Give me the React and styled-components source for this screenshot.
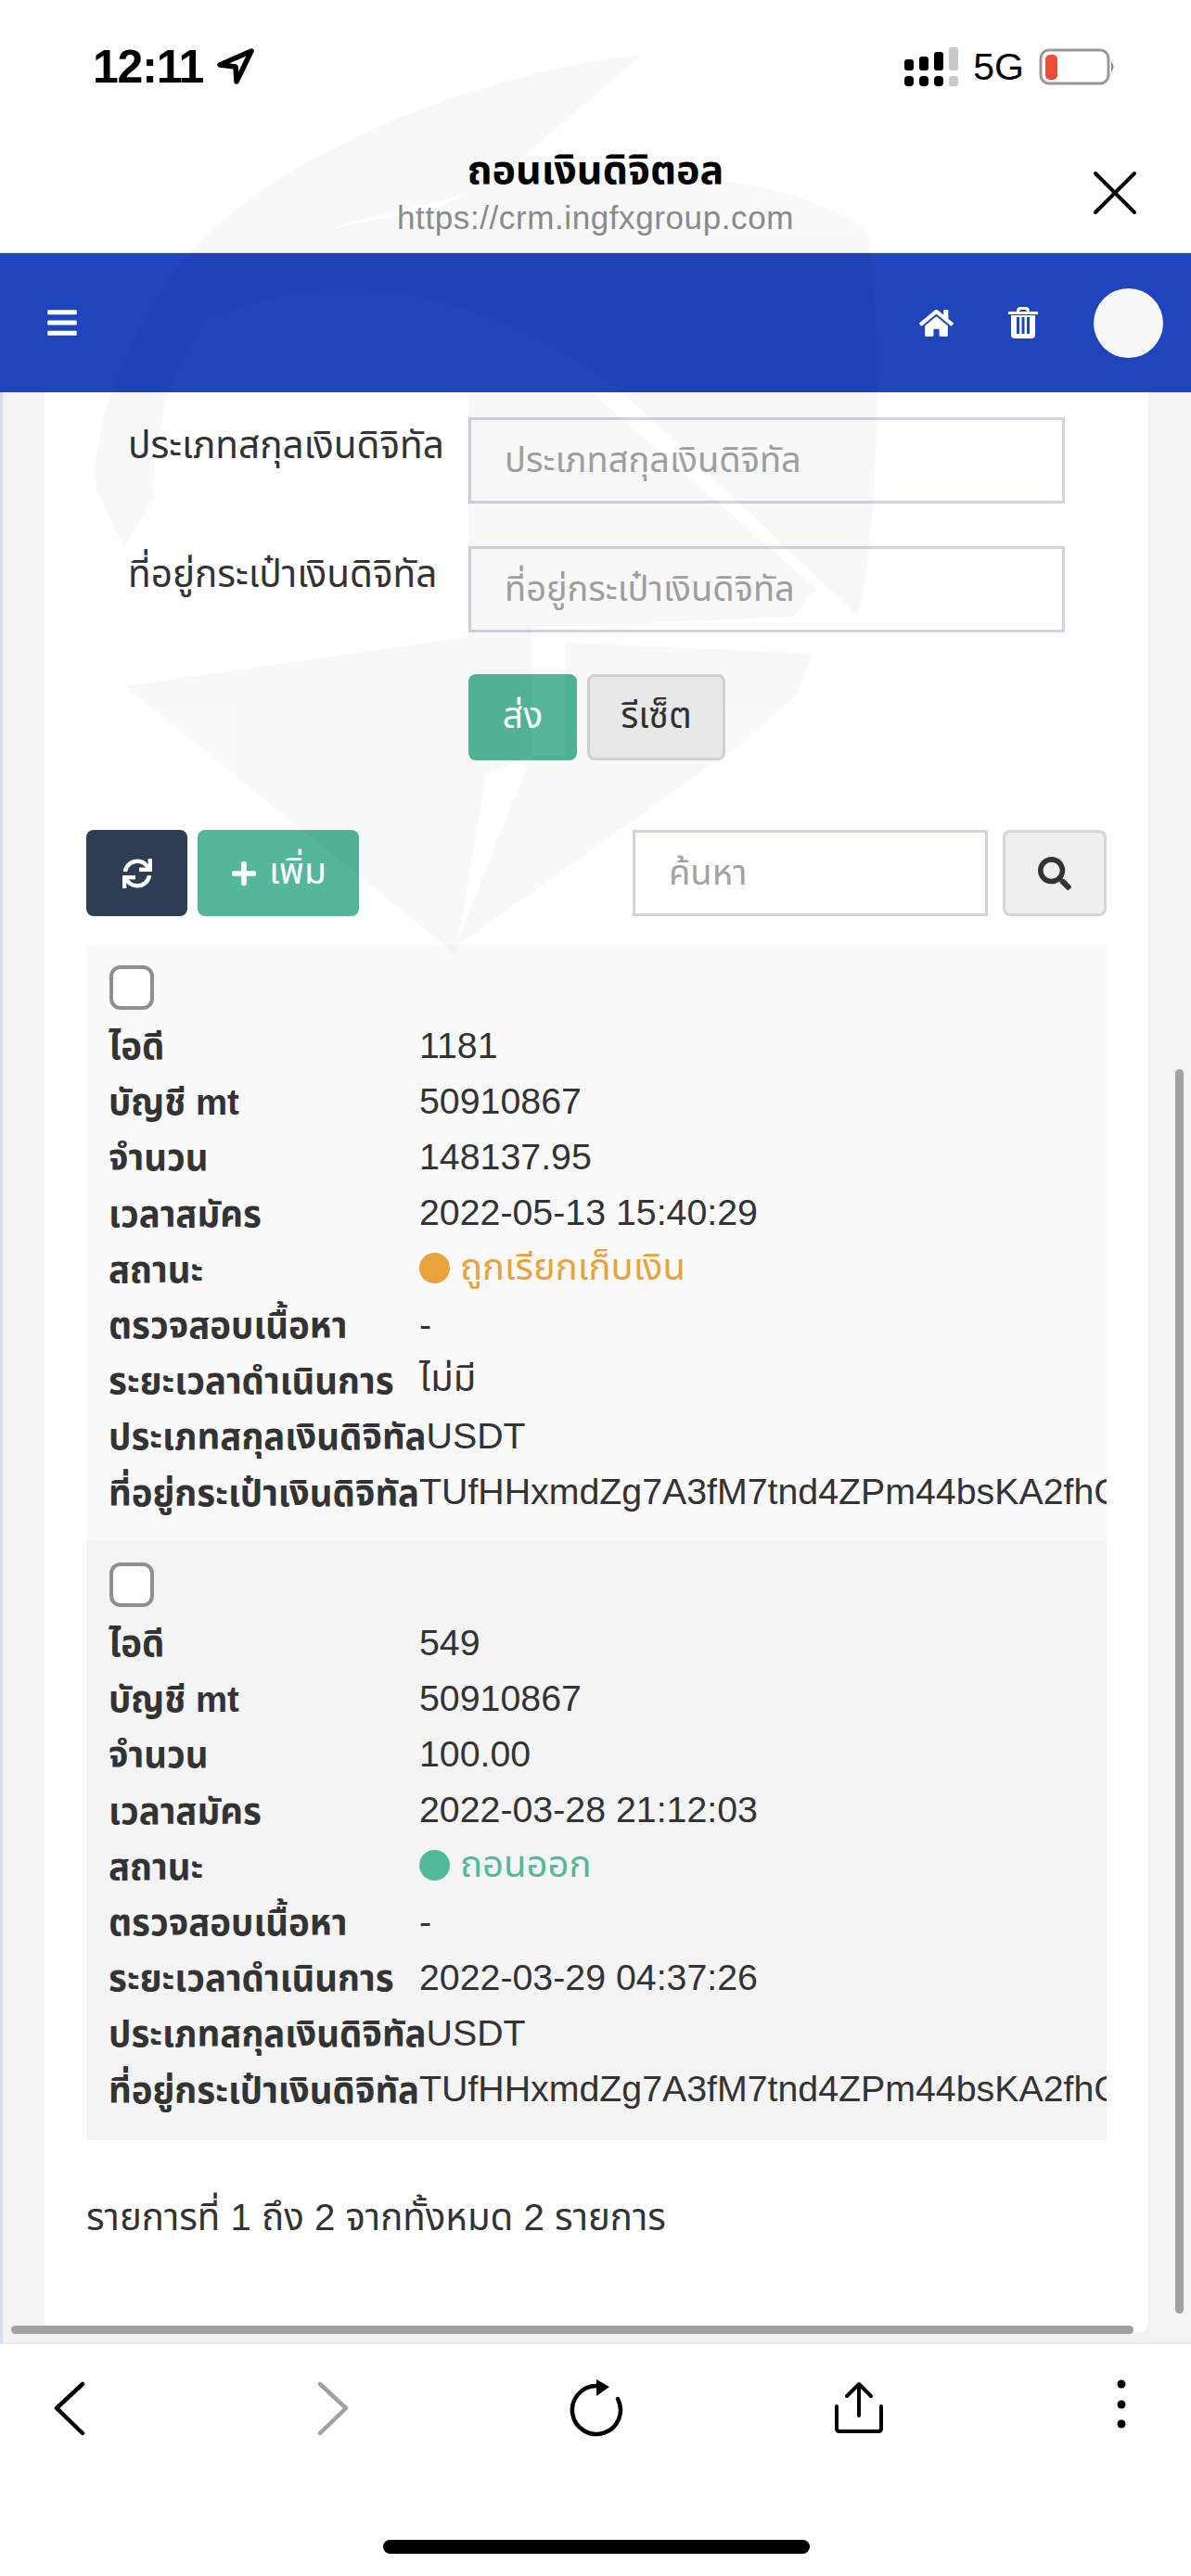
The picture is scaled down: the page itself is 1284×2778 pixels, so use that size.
import React from "react";
import styled, { createGlobalStyle } from "styled-components";
import { FaBars, FaHome, FaPlus, FaSearch, FaSync } from "react-icons/fa";

const Global = createGlobalStyle`
  html, body { margin: 0; padding: 0; background: #fff; }
  * { box-sizing: border-box; }
`;

const Phone = styled.div`
  position: relative;
  width: 1284px;
  height: 2778px;
  overflow: hidden;
  display: flex;
  flex-direction: column;
  background: #fff;
  font-family: "Liberation Sans", "Noto Sans", "Noto Sans Thai", sans-serif;
  color: #333;
`;

const Watermark = styled.svg`
  position: absolute;
  left: 0;
  top: 0;
  width: 1284px;
  height: 1100px;
  pointer-events: none;
  z-index: 5;
`;

const StatusBar = styled.div`
  height: 140px;
  flex: none;
  display: flex;
  justify-content: space-between;
  align-items: center;
  padding: 4px 80px 0 100px;
`;

const Clock = styled.div`
  display: flex;
  align-items: center;
  gap: 15px;
  font-size: 50px;
  font-weight: 700;
  letter-spacing: -1.2px;
  color: #000;
`;

const StatusRight = styled.div`
  display: flex;
  align-items: center;
  gap: 16px;
`;

const NetLabel = styled.span`
  font-size: 41px;
  color: #000;
`;

const TitleBar = styled.div`
  position: relative;
  height: 133px;
  flex: none;
  display: flex;
  flex-direction: column;
  align-items: center;
  padding-top: 13px;
  border-bottom: 1px solid #e4e4e4;
`;

const Title = styled.div`
  font-size: 43px;
  font-weight: 700;
  line-height: 60px;
  color: #000;
`;

const Url = styled.div`
  font-size: 35px;
  line-height: 44px;
  color: #8e8e8e;
  letter-spacing: 0.6px;
`;

const CloseButton = styled.svg`
  position: absolute;
  right: 58px;
  top: 44px;
  width: 48px;
  height: 48px;
`;

const NavBar = styled.div`
  height: 150px;
  flex: none;
  display: flex;
  align-items: center;
  background: #1f45bd;
  color: #fff;
  padding: 0 30px 0 50px;
`;

const NavSpacer = styled.div`
  flex: 1;
`;

const NavIcon = styled.span`
  display: flex;
  justify-content: center;
  width: ${(p) => p.$w}px;
  font-size: ${(p) => p.$size}px;
`;

const TrashIcon = styled.svg`
  width: 32px;
  height: 34px;
  margin-left: 58px;
`;

const Avatar = styled.div`
  width: 75px;
  height: 75px;
  border-radius: 50%;
  background: #f8f8f8;
  margin-left: 60px;
`;

const Viewport = styled.div`
  position: relative;
  height: 2105px;
  flex: none;
  background: #f3f3f4;
  border-left: 3px solid #d9deea;
  border-bottom: 2px solid #e9e9e9;
  padding: 0 46px 0 45px;
  overflow: hidden;
`;

const Card = styled.div`
  height: 2092px;
  background: #fff;
  border-radius: 0 0 10px 10px;
  padding: 27px 45px 0;
  overflow: hidden;
`;

const FormRow = styled.div`
  display: flex;
  margin-bottom: 46px;
`;

const FormLabel = styled.label`
  width: 412px;
  flex: none;
  padding: 2px 0 0 45px;
  font-size: 40.5px;
  line-height: 56px;
  white-space: nowrap;
`;

const Input = styled.input`
  width: ${(p) => p.$w}px;
  height: 93px;
  border: 3px solid #d3d3e0;
  background: transparent;
  padding: 0 36px;
  font: inherit;
  font-size: 38px;
  outline: none;
  &::placeholder { color: #a3a3a3; opacity: 1; }
`;

const FormActions = styled.div`
  display: flex;
  gap: 11px;
  padding-left: 412px;
  margin-top: -1px;
`;

const Button = styled.button`
  height: 93px;
  width: ${(p) => p.$w}px;
  border-radius: 8px;
  border: ${(p) => (p.$kind === "light" ? "3px solid #d6d6d8" : "none")};
  background: ${(p) =>
    p.$kind === "green" ? "#54b79a" : p.$kind === "dark" ? "#2e3d52" : p.$kind === "light" ? "#efeff0" : "#fff"};
  color: ${(p) => (p.$kind === "light" ? "#333" : "#fff")};
  font: inherit;
  font-size: 39px;
  padding: 0;
  display: flex;
  align-items: center;
  justify-content: center;
  gap: 12px;
`;

const TableTools = styled.div`
  display: flex;
  align-items: center;
  gap: 11px;
  margin-top: 75px;
`;

const ToolSpacer = styled.div`
  flex: 1;
`;

const SearchButton = styled(Button)`
  margin-left: 5px;
  color: #333;
  font-size: 36px;
`;

const Table = styled.div`
  margin-top: 31px;
  width: 1100px;
  overflow: hidden;
`;

const Record = styled.div`
  height: ${(p) => p.$h}px;
  background: ${(p) => p.$bg};
  padding: ${(p) => p.$pad}px 0 0 24px;
  white-space: nowrap;
`;

const Check = styled.div`
  width: 48px;
  height: 48px;
  margin-left: 1px;
  border: 4px solid #8e8e93;
  border-radius: 12px;
  background: #fff;
  margin-bottom: 11px;
`;

const Line = styled.div`
  display: flex;
  height: 60.2px;
  align-items: center;
`;

const Key = styled.div`
  min-width: 335px;
  font-size: 38.4px;
  font-weight: 700;
  color: #333;
`;

const Value = styled.div`
  font-size: ${(p) => p.$size || 39.3}px;
  color: ${(p) => p.$color || "#333"};
  display: flex;
  align-items: center;
  gap: 11px;
  margin-top: -6px;
`;

const Dot = styled.span`
  width: 33px;
  height: 33px;
  border-radius: 50%;
  background: ${(p) => p.$color};
`;

const Summary = styled.div`
  margin-top: 54px;
  font-size: 40.2px;
  line-height: 60px;
`;

const ScrollY = styled.div`
  position: absolute;
  right: 8px;
  top: 730px;
  bottom: 31px;
  width: 9px;
  border-radius: 5px;
  background: #a2a2a2;
`;

const ScrollX = styled.div`
  position: absolute;
  left: 9px;
  bottom: 9px;
  width: 1210px;
  height: 9px;
  border-radius: 5px;
  background: #a2a2a2;
`;

const BottomBar = styled.div`
  position: relative;
  flex: 1;
  display: flex;
  justify-content: space-between;
  padding: 34px 45px 0 46px;
`;

const ToolSlot = styled.div`
  width: 60px;
  display: flex;
  justify-content: center;
`;

const ToolIcon = styled.svg`
  width: ${(p) => p.$w}px;
  height: 70px;
`;

const HomeIndicator = styled.div`
  position: absolute;
  left: 413px;
  bottom: 24px;
  width: 460px;
  height: 15px;
  border-radius: 8px;
  background: #000;
`;

const rows = [
  {
    id: "1181",
    created: "2022-05-13 15:40:29",
    amount: "148137.95",
    status: "ถูกเรียกเก็บเงิน",
    color: "#e8a33d",
    done: "ไม่มี",
    doneSize: 40,
    bg: "#f9f9f9",
    h: 642,
    pad: 22,
  },
  {
    id: "549",
    created: "2022-03-28 21:12:03",
    amount: "100.00",
    status: "ถอนออก",
    color: "#52b99a",
    done: "2022-03-29 04:37:26",
    bg: "#f4f4f5",
    h: 647,
    pad: 24,
  },
];

export default function App() {
  return (
    <Phone>
      <Global />
      <StatusBar>
        <Clock>
          12:11
          <svg width="40" height="42" viewBox="0 0 40 42">
            <path d="M37 4 L3 19 L20 21 L21 37 Z" fill="none" stroke="#000" strokeWidth="5.5" strokeLinejoin="round" />
          </svg>
        </Clock>
        <StatusRight>
          <svg width="58" height="42" viewBox="0 0 58 42">
            <rect x="0" y="13" width="10" height="12" rx="3" fill="#000" />
            <rect x="16" y="10" width="10" height="15" rx="3" fill="#000" />
            <rect x="32" y="5" width="10" height="20" rx="3" fill="#000" />
            <rect x="48" y="0" width="10" height="25" rx="3" fill="#c8c8c8" />
            <rect x="0" y="31" width="10" height="11" rx="4" fill="#000" />
            <rect x="16" y="31" width="10" height="11" rx="4" fill="#000" />
            <rect x="32" y="31" width="10" height="11" rx="4" fill="#000" />
            <rect x="48" y="31" width="10" height="11" rx="3" fill="#c8c8c8" />
          </svg>
          <NetLabel>5G</NetLabel>
          <svg width="84" height="40" viewBox="0 0 84 40">
            <rect x="2" y="2" width="73" height="36" rx="9" fill="none" stroke="#999" strokeWidth="3" />
            <rect x="7" y="7" width="13" height="27" rx="5" fill="#ee4b3b" />
            <path d="M78 14 Q83 20 78 26 Z" fill="#888" />
          </svg>
        </StatusRight>
      </StatusBar>
      <TitleBar>
        <Title>ถอนเงินดิจิตอล</Title>
        <Url>https://crm.ingfxgroup.com</Url>
        <CloseButton viewBox="0 0 48 48">
          <path d="M3 3 L45 45 M45 3 L3 45" stroke="#000" strokeWidth="4" strokeLinecap="round" />
        </CloseButton>
      </TitleBar>
      <NavBar>
        <NavIcon $w={34} $size={36}><FaBars /></NavIcon>
        <NavSpacer />
        <NavIcon $w={40} $size={37}><FaHome /></NavIcon>
        <TrashIcon viewBox="0 0 32 34">
          <path d="M0 5 H32 V8 H0 Z M9 5 Q9 0 13 0 H19 Q23 0 23 5 H20 Q20 3 18 3 H14 Q12 3 12 5 Z" fill="#fff" />
          <path d="M3 9 H29 V30 Q29 34 25 34 H7 Q3 34 3 30 Z M9 11 V29 H12 V11 Z M14.5 11 V29 H17.5 V11 Z M20 11 V29 H23 V11 Z" fill="#fff" fillRule="evenodd" />
        </TrashIcon>
        <Avatar />
      </NavBar>
      <Viewport>
        <Card>
          <FormRow>
            <FormLabel>ประเภทสกุลเงินดิจิทัล</FormLabel>
            <Input $w={643} placeholder="ประเภทสกุลเงินดิจิทัล" />
          </FormRow>
          <FormRow>
            <FormLabel>ที่อยู่กระเป๋าเงินดิจิทัล</FormLabel>
            <Input $w={643} placeholder="ที่อยู่กระเป๋าเงินดิจิทัล" />
          </FormRow>
          <FormActions>
            <Button $kind="green" $w={117}>ส่ง</Button>
            <Button $kind="light" $w={149}>รีเซ็ต</Button>
          </FormActions>
          <TableTools>
            <Button $kind="dark" $w={109}><FaSync size={32} /></Button>
            <Button $kind="green" $w={174}><FaPlus size={30} />เพิ่ม</Button>
            <ToolSpacer />
            <Input $w={383} placeholder="ค้นหา" />
            <SearchButton $kind="light" $w={112}><FaSearch /></SearchButton>
          </TableTools>
          <Table>
            {rows.map((r) => (
              <Record key={r.id} $bg={r.bg} $h={r.h} $pad={r.pad}>
                <Check />
                <Line><Key>ไอดี</Key><Value>{r.id}</Value></Line>
                <Line><Key>บัญชี mt</Key><Value>50910867</Value></Line>
                <Line><Key>จำนวน</Key><Value>{r.amount}</Value></Line>
                <Line><Key>เวลาสมัคร</Key><Value>{r.created}</Value></Line>
                <Line><Key>สถานะ</Key><Value $size={40} $color={r.color}><Dot $color={r.color} />{r.status}</Value></Line>
                <Line><Key>ตรวจสอบเนื้อหา</Key><Value>-</Value></Line>
                <Line><Key>ระยะเวลาดำเนินการ</Key><Value $size={r.doneSize}>{r.done}</Value></Line>
                <Line><Key>ประเภทสกุลเงินดิจิทัล</Key><Value>USDT</Value></Line>
                <Line><Key>ที่อยู่กระเป๋าเงินดิจิทัล</Key><Value>TUfHHxmdZg7A3fM7tnd4ZPm44bsKA2fhGq</Value></Line>
              </Record>
            ))}
          </Table>
          <Summary>รายการที่ 1 ถึง 2 จากทั้งหมด 2 รายการ</Summary>
        </Card>
        <ScrollY />
        <ScrollX />
      </Viewport>
      <BottomBar>
        <ToolSlot>
          <ToolIcon $w={36} viewBox="0 0 36 70">
            <path d="M31 9 L3 35 L31 62" fill="none" stroke="#000" strokeWidth="4.5" strokeLinecap="round" strokeLinejoin="round" />
          </ToolIcon>
        </ToolSlot>
        <ToolSlot>
          <ToolIcon $w={36} viewBox="0 0 36 70">
            <path d="M4 9 L32 35 L4 62" fill="none" stroke="#a0a0a0" strokeWidth="4.5" strokeLinecap="round" strokeLinejoin="round" />
          </ToolIcon>
        </ToolSlot>
        <ToolSlot>
          <ToolIcon $w={60} viewBox="0 0 60 70">
            <path d="M30 11 A26 26 0 1 0 53 25" fill="none" stroke="#000" strokeWidth="4.5" strokeLinecap="round" />
            <path d="M30 4 L44 12 L30 22 Z" fill="#000" />
          </ToolIcon>
        </ToolSlot>
        <ToolSlot>
          <ToolIcon $w={54} viewBox="0 0 54 70">
            <path d="M27 9 V43 M14 22 L27 9 L40 22" fill="none" stroke="#000" strokeWidth="4" strokeLinecap="round" strokeLinejoin="round" />
            <path d="M3 33 V57 Q3 60 6 60 H48 Q51 60 51 57 V33" fill="none" stroke="#000" strokeWidth="4" strokeLinecap="round" />
          </ToolIcon>
        </ToolSlot>
        <ToolSlot>
          <ToolIcon $w={12} viewBox="0 0 12 70">
            <circle cx="6" cy="9" r="4.5" fill="#000" />
            <circle cx="6" cy="31" r="4.5" fill="#000" />
            <circle cx="6" cy="52" r="4.5" fill="#000" />
          </ToolIcon>
        </ToolSlot>
        <HomeIndicator />
      </BottomBar>
      <Watermark viewBox="0 0 1284 1100">
        <g fill="#000" opacity="0.025">
          <path d="M691 60 C560 70 300 150 190 290 C130 380 95 470 105 530 L133 590 L165 540 C165 450 190 350 290 280 C380 220 480 230 540 190 Z" />
          <path d="M540 190 C700 170 880 200 935 250 C950 350 950 550 925 665 L700 450 C600 350 430 290 300 320 C260 330 230 345 196 340 C220 280 350 240 460 230 Z" />
          <path d="M505 425 L640 425 L880 635 L855 665 L573 677 L505 690 Z" />
          <path d="M135 740 L573 677 L573 815 L524 835 L491 1029 Z" />
          <path d="M610 693 L876 705 L860 748 L803 799 L491 1021 L573 815 L610 815 Z" />
        </g>
      </Watermark>
    </Phone>
  );
}
